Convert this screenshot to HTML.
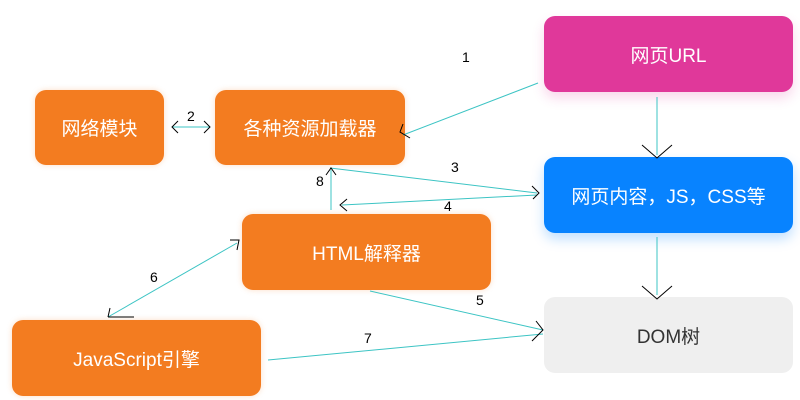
<!DOCTYPE html>
<html><head><meta charset="utf-8"><style>
body{margin:0;width:800px;height:400px;background:#fff;position:relative;overflow:hidden;font-family:"Liberation Sans","Noto Sans CJK SC",sans-serif}
.b{position:absolute;border-radius:11px;color:#fff;font-size:19px;display:flex;align-items:center;justify-content:center}
.o{background:#f37c20;box-shadow:0 0 6px rgba(243,124,32,.25)}
svg{position:absolute;left:0;top:0}
</style></head><body>
<div class="b" style="left:544px;top:16px;width:249px;height:76px;background:#e0389a;box-shadow:0 6px 12px rgba(224,56,154,.2)">网页URL</div>
<div class="b o" style="left:35px;top:90px;width:129px;height:75px">网络模块</div>
<div class="b o" style="left:215px;top:90px;width:190px;height:75px">各种资源加载器</div>
<div class="b" style="left:544px;top:157px;width:249px;height:76px;background:#0883ff;box-shadow:0 6px 12px rgba(8,131,255,.25)">网页内容，JS，CSS等</div>
<div class="b o" style="left:242px;top:214px;width:249px;height:76px">HTML解释器</div>
<div class="b o" style="left:12px;top:320px;width:249px;height:76px">JavaScript引擎</div>
<div class="b" style="left:544px;top:297px;width:249px;height:76px;background:#efefef;color:#333">DOM树</div>
<svg width="800" height="400" fill="none" stroke-width="1">
<g stroke="#3cc4c4">
<line x1="538" y1="83" x2="403" y2="135"/>
<line x1="172" y1="127" x2="210" y2="127"/>
<line x1="657" y1="97" x2="657" y2="155"/>
<line x1="657" y1="237" x2="657" y2="295"/>
<line x1="330" y1="168" x2="537" y2="193"/>
<line x1="342" y1="205" x2="537" y2="195"/>
<line x1="331" y1="210" x2="331" y2="170"/>
<line x1="108" y1="317" x2="237" y2="243"/>
<line x1="370" y1="291" x2="543" y2="330"/>
<line x1="268" y1="360" x2="543" y2="334"/>
</g>
<g stroke="#000">
<path d="M403 124 L400 132 L410 138"/>
<path d="M178 121 L172 127 L178 133 M204 121 L210 127 L204 133"/>
<path d="M642 145 L657 158 L672 145"/>
<path d="M642 286 L657 299 L672 286"/>
<path d="M532 186 L539 193 L533 199"/>
<path d="M347 199 L340 205 L347 211"/>
<path d="M326 175 L331 168 L336 175"/>
<path d="M230 240 L239 240 L237 250"/>
<path d="M108 317 L134 317 M108 317 L110 308"/>
<path d="M536 321 L543 330 L532 341"/>
</g>
<g fill="#000" font-size="14" font-family="Liberation Sans,sans-serif">
<text x="462" y="62">1</text><text x="187" y="121">2</text><text x="451" y="172">3</text>
<text x="444" y="211">4</text><text x="476" y="305">5</text><text x="150" y="282">6</text>
<text x="364" y="343">7</text><text x="316" y="186">8</text>
</g>
</svg>
</body></html>
